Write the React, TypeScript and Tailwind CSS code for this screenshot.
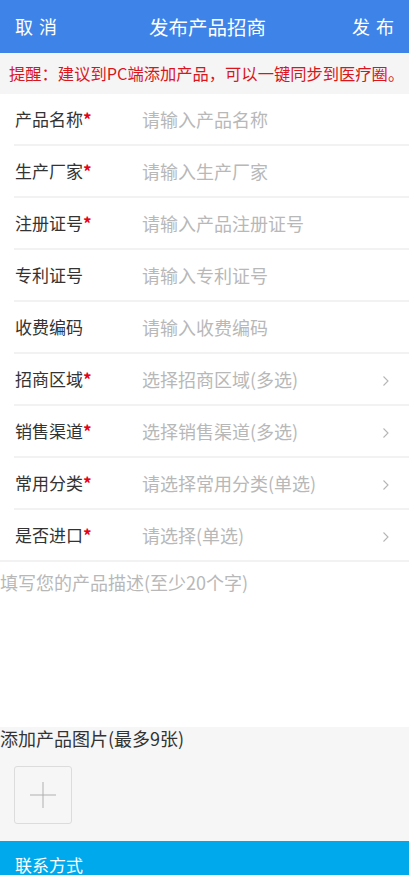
import React from "react";

const font = { fontFamily: '"Noto Sans CJK SC", "Noto Sans", sans-serif' };

type Row = { label: string; placeholder: string; required: boolean; arrow: boolean };

const rows: Row[] = [
  { label: "产品名称", placeholder: "请输入产品名称", required: true, arrow: false },
  { label: "生产厂家", placeholder: "请输入生产厂家", required: true, arrow: false },
  { label: "注册证号", placeholder: "请输入产品注册证号", required: true, arrow: false },
  { label: "专利证号", placeholder: "请输入专利证号", required: false, arrow: false },
  { label: "收费编码", placeholder: "请输入收费编码", required: false, arrow: false },
  { label: "招商区域", placeholder: "选择招商区域(多选)", required: true, arrow: true },
  { label: "销售渠道", placeholder: "选择销售渠道(多选)", required: true, arrow: true },
  { label: "常用分类", placeholder: "请选择常用分类(单选)", required: true, arrow: true },
  { label: "是否进口", placeholder: "请选择(单选)", required: true, arrow: true },
];

function Chevron() {
  return (
    <svg width="8" height="12" viewBox="0 0 8 12" className="shrink-0">
      <path d="M1.5 1.5 L6 6 L1.5 10.5" fill="none" stroke="#b5b5b5" strokeWidth="1.1" />
    </svg>
  );
}

export default function App() {
  return (
    <div className="w-[409px] h-[875px] overflow-hidden bg-white flex flex-col" style={font}>
      <header className="h-[53px] shrink-0 bg-[#3e83e8] flex items-center justify-between px-[15px] text-white">
        <span className="text-[18px] tracking-[6px]">取消</span>
        <span className="text-[19.5px]">发布产品招商</span>
        <span className="text-[18px] tracking-[6px] mr-[-6px]">发布</span>
      </header>
      <div className="h-[41px] shrink-0 bg-[#f5f5f5] flex items-center pl-[9px] text-[#d9161c] text-[16.3px] whitespace-nowrap">
        提醒：建议到PC端添加产品，可以一键同步到医疗圈。
      </div>
      <div className="flex flex-col">
        {rows.map((r, i) => (
          <div
            key={r.label}
            className={
              i === rows.length - 1
                ? "h-[52px] flex items-center border-b-2 border-[#f2f2f2]"
                : "h-[52px] flex items-center ml-[14px] border-b-2 border-[#f2f2f2]"
            }
          >
            <div className={i === rows.length - 1 ? "w-[142px] pl-[15px] flex items-center" : "w-[128px] pl-[1px] flex items-center"}>
              <span className="text-[17px] text-[#333]">{r.label}</span>
              {r.required && <span className="text-[17px] text-[#e60012] font-bold">*</span>}
            </div>
            <span className="flex-1 text-[18px] text-[#b8b8b8]">{r.placeholder}</span>
            {r.arrow && (
              <div className="pr-[19px] pt-[4px]">
                <Chevron />
              </div>
            )}
          </div>
        ))}
      </div>
      <div className="h-[165px] shrink-0 bg-white pt-[7px] text-[18px] text-[#b8b8b8] whitespace-nowrap">
        填写您的产品描述(至少20个字)
      </div>
      <div className="h-[114px] shrink-0 bg-[#f6f6f6] flex flex-col">
        <div className="text-[18px] text-[#333] leading-[24px] mt-[-1px]">添加产品图片(最多9张)</div>
        <div className="mt-[16px] ml-[14px] w-[58px] h-[58px] border border-[#dcdcdc] rounded-[3px] flex items-center justify-center">
          <svg width="28" height="28" viewBox="0 0 28 28">
            <path d="M14 1 V27 M1 14 H27" stroke="#b0b0b0" strokeWidth="1" />
          </svg>
        </div>
      </div>
      <div className="h-[34px] shrink-0 bg-[#00a9eb] flex items-start pt-[15px] pl-[15px] text-white text-[17px] leading-[18px]">
        联系方式
      </div>
    </div>
  );
}
